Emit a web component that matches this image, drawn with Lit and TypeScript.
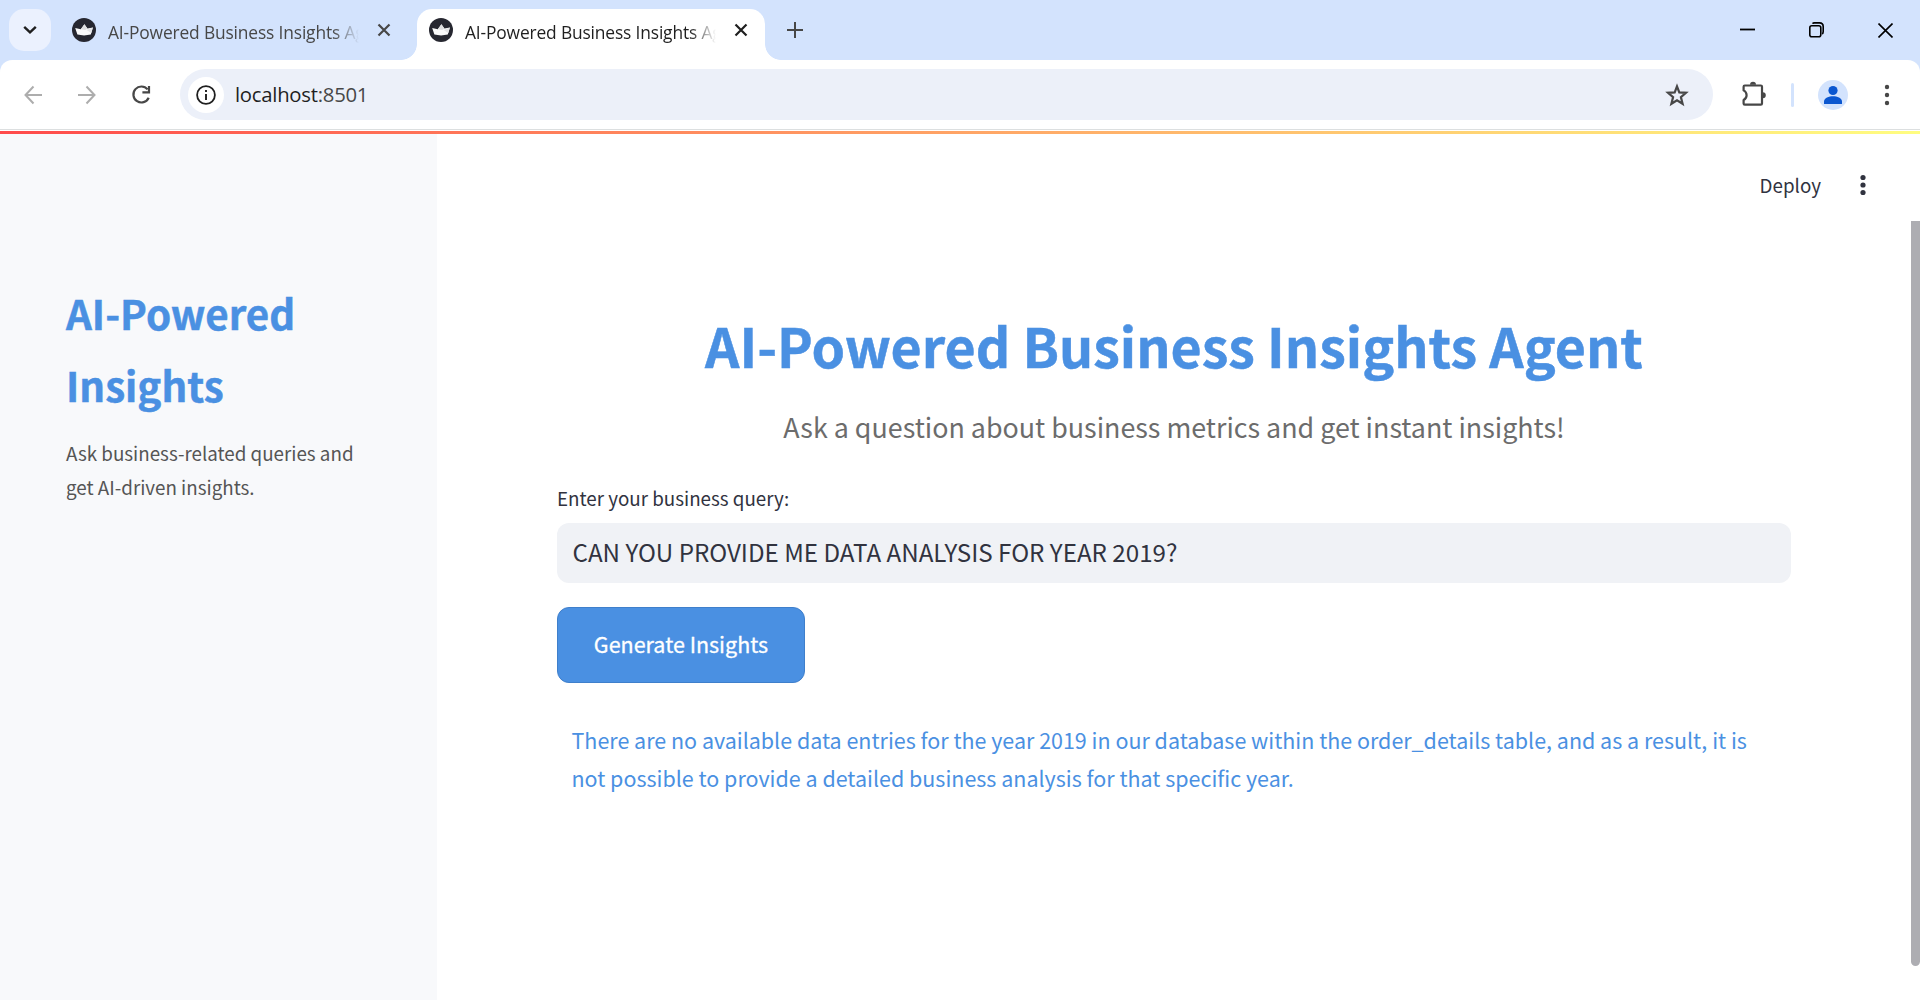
import { LitElement, html, css, svg } from "lit";
import { customElement, property } from "lit/decorators.js";

const crown = svg`
  <circle cx="12" cy="12" r="12" fill="#262730"/>
  <path d="M3.2 10 8.8 11.2 12.4 6.2 15.4 10.6 20.9 9.6 18.8 16.6Q12 18.2 5.4 16.6Z" fill="#fafafa"/>
  <path d="M12.4 6.2 15.4 10.6 13.2 12 8.8 11.2Z" fill="#dededf"/>
  <path d="M20.9 9.6 19.3 15 14.6 12Z" fill="#e4e4e6"/>`;

@customElement("browser-tab")
export class BrowserTab extends LitElement {
  @property() label = "";
  @property({ type: Boolean, reflect: true }) active = false;

  static styles = css`
    :host {
      display: flex;
      align-items: center;
      box-sizing: border-box;
      width: 348px;
      height: 51px;
      padding: 0 24px 9px 12px;
      color: #474747;
      position: relative;
      border-radius: 15px 15px 0 0;
    }
    :host([active]) {
      background: #fff;
      color: #1f1f1f;
    }
    :host([active])::before,
    :host([active])::after {
      content: "";
      position: absolute;
      bottom: 0;
      width: 16px;
      height: 16px;
    }
    :host([active])::before {
      left: -16px;
      background: radial-gradient(circle at 0 0, transparent 15.5px, #fff 16.2px);
    }
    :host([active])::after {
      right: -16px;
      background: radial-gradient(circle at 100% 0, transparent 15.5px, #fff 16.2px);
    }
    .favicon {
      flex: none;
      width: 24px;
      height: 24px;
    }
    .label {
      flex: none;
      width: 252px;
      margin-left: 12px;
      padding-top: 3px;
      overflow: hidden;
      white-space: nowrap;
      font: 400 17.4px/30px "Open Sans", "Noto Sans", sans-serif;
      letter-spacing: -0.16px;
      -webkit-mask-image: linear-gradient(90deg, #000 225px, transparent 251px);
      mask-image: linear-gradient(90deg, #000 225px, transparent 251px);
    }
    .close {
      flex: none;
      width: 14px;
      height: 14px;
      margin-left: 17px;
    }
  `;

  render() {
    return html`
      <svg class="favicon" viewBox="0 0 24 24">${crown}</svg>
      <span class="label">${this.label}</span>
      <svg class="close" viewBox="0 0 14 14" fill="none" stroke="currentColor" stroke-width="2.2">
        <path d="M1.5 1.5 12.5 12.5M12.5 1.5 1.5 12.5" />
      </svg>
    `;
  }
}

@customElement("browser-chrome")
export class BrowserChrome extends LitElement {
  static styles = css`
    :host {
      display: block;
      background: #d3e3fd;
    }
    svg {
      display: block;
      flex: none;
    }
    .strip {
      display: flex;
      height: 60px;
      align-items: flex-end;
    }
    .search {
      display: grid;
      place-items: center;
      width: 42px;
      height: 42px;
      margin: 0 9px 9px;
      border-radius: 15px;
      background: #ebf1fe;
    }
    .tabs {
      display: flex;
      gap: 9px;
    }
    .plus {
      margin: 0 0 22px 22px;
    }
    .window {
      display: flex;
      align-items: center;
      gap: 54px;
      height: 60px;
      margin-left: auto;
      padding-right: 27px;
    }
    .toolbar {
      display: flex;
      align-items: center;
      box-sizing: border-box;
      height: 71px;
      padding: 0 27px 2px 21px;
      border-radius: 12px 12px 0 0;
      background: linear-gradient(#dcdfe0, #dcdfe0) 0 69px / 100% 1px no-repeat #fff;
    }
    .nav {
      display: flex;
      gap: 30px;
      padding-top: 1px;
    }
    .omnibox {
      display: flex;
      align-items: center;
      flex: 1;
      box-sizing: border-box;
      height: 51px;
      margin: 0 26px 0 27px;
      padding: 0 24px 0 8px;
      border-radius: 26px;
      background: #ecf0f9;
      font: 20.3px/36px "Open Sans", "Noto Sans", sans-serif;
      color: #474747;
    }
    .info {
      display: grid;
      place-items: center;
      width: 36px;
      height: 36px;
      margin-right: 11px;
      border-radius: 50%;
      background: #fff;
    }
    .url {
      flex: 1;
      padding-bottom: 2px;
      letter-spacing: -0.25px;
    }
    .host {
      color: #1f1f1f;
    }
    .divider {
      width: 3px;
      height: 24px;
      margin: 0 24px 0 25px;
      border-radius: 2px;
      background: #d3e3fd;
    }
    .menu {
      margin-left: 33px;
    }
  `;

  render() {
    const title = "AI-Powered Business Insights Agent";
    return html`
      <div class="strip">
        <div class="search">
          <svg width="14" height="10" viewBox="0 0 14 10" fill="none" stroke="#1f1f1f" stroke-width="2.4"><path d="M1.2 1.8 7 7.4 12.8 1.8" /></svg>
        </div>
        <div class="tabs">
          <browser-tab label=${title}></browser-tab>
          <browser-tab label=${title} active></browser-tab>
        </div>
        <svg class="plus" width="16" height="16" viewBox="0 0 16 16" stroke="#474747" stroke-width="2"><path d="M8 0V16M0 8H16" /></svg>
        <div class="window">
          <svg width="15" height="16" viewBox="0 0 15 16"><path d="M0 7.5H15" stroke="#000" stroke-width="1.8" /></svg>
          <svg width="15" height="16" viewBox="0 0 15 16" fill="none" stroke="#000" stroke-width="1.6"><rect x=".8" y="3.8" width="11" height="11" rx="2" /><path d="M3.5 1.6Q4 .9 5.5 .9H10.5Q14.2 .9 14.2 4.6V9.6Q14.2 11.4 13.2 12" /></svg>
          <svg width="15" height="15" viewBox="0 0 15 15" stroke="#000" stroke-width="1.6"><path d="M.5 .5 14.5 14.5M14.5 .5 .5 14.5" /></svg>
        </div>
      </div>
      <div class="toolbar">
        <div class="nav">
          <svg width="24" height="24" viewBox="0 0 24 24" fill="none" stroke="#adadad" stroke-width="2"><path d="M21 12H5M12.5 3.5 4.5 12 12.5 20.5" /></svg>
          <svg width="24" height="24" viewBox="0 0 24 24" fill="none" stroke="#adadad" stroke-width="2"><path d="M3 12H19M11.5 3.5 19.5 12 11.5 20.5" /></svg>
          <svg width="24" height="24" viewBox="0 0 24 24" fill="none" stroke="#474747" stroke-width="2.2"><path d="M18.6 6.4A8 8 0 1 0 19.7 14.8M20 3V9.4H13.4" /></svg>
        </div>
        <div class="omnibox">
          <span class="info">
            <svg width="20" height="20" viewBox="0 0 20 20"><circle cx="10" cy="10" r="8.9" fill="none" stroke="#1f1f1f" stroke-width="1.8" /><path d="M10 9V15M10 5V7" stroke="#1f1f1f" stroke-width="1.9" /></svg>
          </span>
          <span class="url"><span class="host">localhost</span>:8501</span>
          <svg width="24" height="24" viewBox="0 0 24 24" fill="none" stroke="#474747" stroke-width="2.2"><path d="M12 3.4 14.3 9.4 21 9.8 15.9 14.1 17.6 20.8 12 17.2 6.4 20.8 8.1 14.1 3 9.8 9.7 9.4Z" /></svg>
        </div>
        <svg width="27" height="27" viewBox="0 0 27 27" fill="none" stroke="#474747" stroke-width="2.2"><path d="M5.8 4.5H21.8Q23 4.5 23 5.7V22.4Q23 23.6 21.8 23.6H5.8Q4.6 23.6 4.6 22.4V19Q7.6 17.4 7.6 14.2T4.6 9.4V5.7Q4.6 4.5 5.8 4.5Z" stroke-linejoin="round" /><path d="M11 3.8A3 3 0 0 1 17 3.8ZM23.8 11.2A3 3 0 0 1 23.8 17.2Z" fill="#474747" stroke="none" /></svg>
        <span class="divider"></span>
        <svg width="30" height="30" viewBox="0 0 30 30"><circle cx="15" cy="15" r="15" fill="#d3e3fd" /><g fill="#0b57d0"><circle cx="15" cy="10.5" r="4.6" /><path d="M6 24V21.5C6 18 11 16.2 15 16.2S24 18 24 21.5V24Z" /></g></svg>
        <svg class="menu" width="12" height="24" viewBox="0 0 12 24" fill="#474747"><circle cx="6" cy="4" r="2.2" /><circle cx="6" cy="12" r="2.2" /><circle cx="6" cy="20" r="2.2" /></svg>
      </div>
    `;
  }
}

@customElement("app-root")
export class AppRoot extends LitElement {
  static styles = css`
    :host {
      display: flex;
      flex-direction: column;
      width: 1920px;
      height: 1000px;
      overflow: hidden;
      background: #fff;
      color: #31333f;
      font-family: "Noto Sans CJK SC", "Noto Sans", sans-serif;
    }
    h1,
    h2,
    p {
      margin: 0;
    }
    .decoration {
      flex: none;
      height: 3px;
      background: linear-gradient(90deg, #ff4b4b, #fffd80);
    }
    .page {
      display: flex;
      flex: 1;
      min-height: 0;
      position: relative;
    }
    .sidebar {
      box-sizing: border-box;
      width: 437px;
      padding: 143px 66px 0;
      background: #f8f9fb;
    }
    .sidebar h2 {
      font-size: 40.3px;
      line-height: 72px;
      font-weight: 700;
      color: #4a90e2;
      -webkit-text-stroke: 0.5px #4a90e2;
    }
    .sidebar p {
      margin-top: 15px;
      font-size: 18.8px;
      line-height: 34px;
      color: #555;
      white-space: nowrap;
    }
    .content {
      flex: 1;
      min-width: 0;
      display: flex;
      flex-direction: column;
    }
    .header {
      display: flex;
      justify-content: flex-end;
      align-items: center;
      height: 30px;
      padding: 36px 54px 0 0;
      gap: 39px;
      font-size: 18.8px;
      line-height: 30px;
    }
    .main {
      display: flex;
      flex-direction: column;
      width: 1234px;
      margin-left: 120px;
      padding-top: 109px;
    }
    .title {
      font-size: 53.7px;
      line-height: 72px;
      font-weight: 700;
      text-align: center;
      color: #4a90e2;
      -webkit-text-stroke: 0.5px #4a90e2;
    }
    .subtitle {
      margin-top: 22px;
      font-size: 26.85px;
      line-height: 48px;
      text-align: center;
      color: #6c6c6c;
    }
    .label {
      margin-top: 32px;
      font-size: 18.8px;
      line-height: 30px;
    }
    .field {
      box-sizing: border-box;
      height: 60px;
      margin-top: 10px;
      padding: 0 15.5px;
      border-radius: 12px;
      background: #f0f2f6;
      font-size: 24.17px;
      line-height: 57px;
    }
    .button {
      align-self: flex-start;
      box-sizing: border-box;
      width: 248px;
      height: 76px;
      margin-top: 24px;
      border: 1px solid #3f7fcb;
      border-radius: 12px;
      background: #4a90e2;
      color: #fff;
      font: 400 21.5px/71px "Noto Sans CJK SC", "Noto Sans", sans-serif;
      padding: 0 0 3px;
      -webkit-text-stroke: 0.3px #fff;
    }
    .result {
      margin: 38px 0 0 14.5px;
      font-size: 21.48px;
      line-height: 38px;
      color: #4a90e2;
      white-space: nowrap;
    }
    .thumb {
      position: absolute;
      right: 0;
      top: 87px;
      width: 9px;
      height: 745px;
      border-radius: 0 0 5px 5px;
      background: #adadb2;
    }
  `;

  render() {
    return html`
      <browser-chrome></browser-chrome>
      <div class="decoration"></div>
      <div class="page">
        <aside class="sidebar">
          <h2>AI-Powered Insights</h2>
          <p>Ask business-related queries and<br />get AI-driven insights.</p>
        </aside>
        <section class="content">
          <header class="header">
            <span>Deploy</span>
            <svg width="6" height="22" viewBox="0 0 6 22" fill="#31333f"><circle cx="3" cy="3.5" r="2.6" /><circle cx="3" cy="11" r="2.6" /><circle cx="3" cy="18.5" r="2.6" /></svg>
          </header>
          <main class="main">
            <h1 class="title">AI-Powered Business Insights Agent</h1>
            <p class="subtitle">Ask a question about business metrics and get instant insights!</p>
            <div class="label">Enter your business query:</div>
            <div class="field">CAN YOU PROVIDE ME DATA ANALYSIS FOR YEAR 2019?</div>
            <button class="button">Generate Insights</button>
            <p class="result">
              There are no available data entries for the year 2019 in our database within the order_details table, and as a result, it is<br />not possible to provide a detailed business analysis for that specific year.
            </p>
          </main>
        </section>
        <div class="thumb"></div>
      </div>
    `;
  }
}
